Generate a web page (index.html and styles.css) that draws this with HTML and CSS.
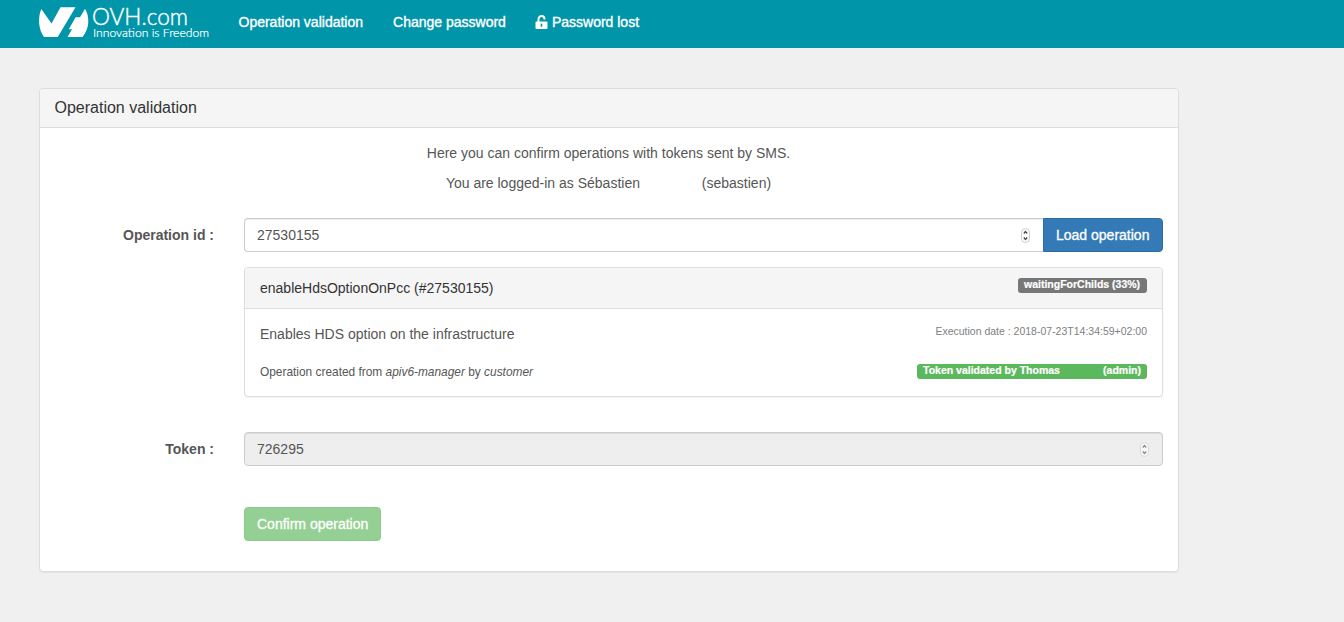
FILE: index.html
```html
<!DOCTYPE html>
<html lang="en">
<head>
<meta charset="utf-8">
<title>Operation validation</title>
<link rel="stylesheet" href="styles.css">
</head>
<body>
<header class="navbar">
  <svg class="logo" width="172" height="48" viewBox="0 0 172 48" role="img" aria-label="OVH.com">
    <path fill="#fff" d="M2.300 9 L12.500 23.500 L21.500 7.300 H36.500 L18.800 37 H5 C-.8 29 -1.200 17.500 2.300 9Z M46 8.800 C51 17 50.500 29 43.500 37 H28.500 L33 29.300 H29.800 L36.600 17.300 H41Z"/>
    <text class="logo-name" x="53" y="25" textLength="96" lengthAdjust="spacingAndGlyphs">OVH.com</text>
    <text class="logo-tag" x="54" y="36.500" textLength="116" lengthAdjust="spacingAndGlyphs">Innovation is Freedom</text>
  </svg>
  <nav class="nav">
    <a>Operation validation</a>
    <a>Change password</a>
    <a><svg class="lock" width="13" height="14" viewBox="0 0 13 14"><path fill="none" stroke="#fff" stroke-width="1.900" d="M3.500 7 V4 A3 3 0 0 1 9.500 4 V4.600"/><path fill="#fff" fill-rule="evenodd" d="M1.500 6.500 H11.500 Q12.500 6.500 12.500 7.500 V13 Q12.500 14 11.500 14 H1.500 Q.5 14 .5 13 V7.500 Q.5 6.500 1.500 6.500Z M5.700 8.800 V11.700 H7.300 V8.800Z"/></svg>Password lost</a>
  </nav>
</header>
<main class="container">
  <section class="panel main-panel">
    <h1 class="panel-heading">Operation validation</h1>
    <div class="panel-body">
      <div class="intro">
        <p>Here you can confirm operations with tokens sent by SMS.</p>
        <p>You are logged-in as Sébastien <span class="gap-name"></span>(sebastien)</p>
      </div>
      <div class="row">
        <span class="label">Operation id :</span>
        <div class="group">
          <div class="input joined">27530155<svg class="spinner" width="9" height="15" viewBox="0 0 9 15"><rect x=".5" y=".5" width="8" height="14" rx="4"/><path d="M2.800 5.500 L4.500 3.500 L6.200 5.500 M2.800 9.500 L4.500 11.500 L6.200 9.500"/></svg></div>
          <div class="btn primary">Load operation</div>
        </div>
      </div>
      <article class="panel operation">
        <header class="op-heading"><span>enableHdsOptionOnPcc (#27530155)</span><span class="badge status">waitingForChilds (33%)</span></header>
        <div class="op-body">
          <div class="op-line"><span>Enables HDS option on the infrastructure</span><span class="date">Execution date : 2018-07-23T14:34:59+02:00</span></div>
          <div class="op-line origin"><span>Operation created from <em>apiv6-manager</em> by <em>customer</em></span><span class="badge success"><span>Token validated by Thomas</span><span>(admin)</span></span></div>
        </div>
      </article>
      <div class="row token">
        <span class="label">Token :</span>
        <div class="input disabled">726295<svg class="spinner" width="9" height="15" viewBox="0 0 9 15"><rect x=".5" y=".5" width="8" height="14" rx="4"/><path d="M2.800 5.500 L4.500 3.500 L6.200 5.500 M2.800 9.500 L4.500 11.500 L6.200 9.500"/></svg></div>
      </div>
      <div class="btn confirm">Confirm operation</div>
    </div>
  </section>
  <hr class="rule">
</main>
</body>
</html>
```
FILE: styles.css
```css
* { box-sizing: border-box; }
body {
  margin: 0;
  background: #f0f0f0;
  color: #565656;
  font: 14px/20px "Liberation Sans", Arial, sans-serif;
}
.navbar {
  display: flex;
  height: 48px;
  padding-left: 39px;
  background: #0095a9;
  color: #fff;
}
.logo { display: block; overflow: visible; }
.logo-name { font: 300 23px Lato, sans-serif; fill: #fff; stroke: #fff; stroke-width: .4px; }
.logo-tag { font: 300 11px Lato, sans-serif; fill: #fff; stroke: #fff; stroke-width: .2px; }
.nav { display: flex; gap: 30px; padding: 12px 0 0 27.500px; -webkit-text-stroke: .35px #fff; }
.nav a { display: flex; white-space: nowrap; }
.lock { margin: 3px 4px 0 -1px; }
.container { width: 1140px; margin: 40px 0 0 39px; }
.panel {
  border: 1px solid #ddd;
  border-radius: 4px;
  background: #fff;
  box-shadow: 0 1px 1px rgba(0, 0, 0, .05);
}
.main-panel { height: 484px; }
.panel-heading {
  height: 39px;
  margin: 0;
  padding: 9px 14.500px;
  border-bottom: 1px solid #ddd;
  border-radius: 3px 3px 0 0;
  background: #f5f5f5;
  color: #333;
  font-size: 16px;
  font-weight: 400;
}
.panel-body { padding: 15px; }
.intro { text-align: center; margin: 0 1px 25px 0; }
.intro p { margin: 0 0 10px; }
.gap-name { display: inline-block; width: 58px; }
.row { display: grid; grid-template-columns: 159px 919px; column-gap: 30px; align-items: center; }
.label { text-align: right; font-weight: 700; }
.group { display: flex; }
.input {
  display: flex;
  flex: 1;
  align-items: center;
  justify-content: space-between;
  height: 34px;
  padding: 0 13px 0 12px;
  border: 1px solid #ccc;
  border-radius: 4px;
  background: #fff;
  box-shadow: inset 0 1px 1px rgba(0, 0, 0, .075);
  color: #555;
}
.joined { border-right: 0; border-radius: 4px 0 0 4px; }
.disabled { background: #eee; }
.spinner rect { fill: #fff; stroke: #ccc; }
.spinner path { fill: none; stroke: #444; stroke-width: 1.200; }
.disabled .spinner { opacity: .6; }
.btn {
  height: 34px;
  padding: 6px 12px;
  border: 1px solid #2e6da4;
  border-radius: 4px;
  color: #fff;
  white-space: nowrap;
  -webkit-text-stroke: .3px #fff;
}
.primary { width: 120px; background: #337ab7; border-radius: 0 4px 4px 0; }
.operation { height: 130px; margin: 15px 0 35px 189px; }
.op-heading {
  display: flex;
  justify-content: space-between;
  height: 41px;
  padding: 10px 15px;
  border-bottom: 1px solid #ddd;
  border-radius: 3px 3px 0 0;
  background: #f5f5f5;
  color: #333;
}
.op-body { padding: 15px; }
.op-line { display: flex; justify-content: space-between; }
.date { margin-top: -3px; color: #808080; font-size: 10.500px; }
.origin { margin-top: 18px; font-size: 11.900px; }
.badge {
  height: 15px;
  padding: 0 6px;
  border-radius: 3px;
  background: #777;
  color: #fff;
  font-size: 10.500px;
  font-weight: 700;
  line-height: 13px;
  -webkit-text-stroke: .2px #fff;
}
.status { width: 129px; }
.success { display: flex; justify-content: space-between; width: 230px; margin-top: 2px; background: #5cb85c; }
.confirm {
  width: 137px;
  margin: 41px 0 0 189px;
  border-color: #4cae4c;
  background: #5cb85c;
  opacity: .65;
}
.rule { margin: 29px 0 0; border: 0; border-top: 1px solid #eee; }
```
